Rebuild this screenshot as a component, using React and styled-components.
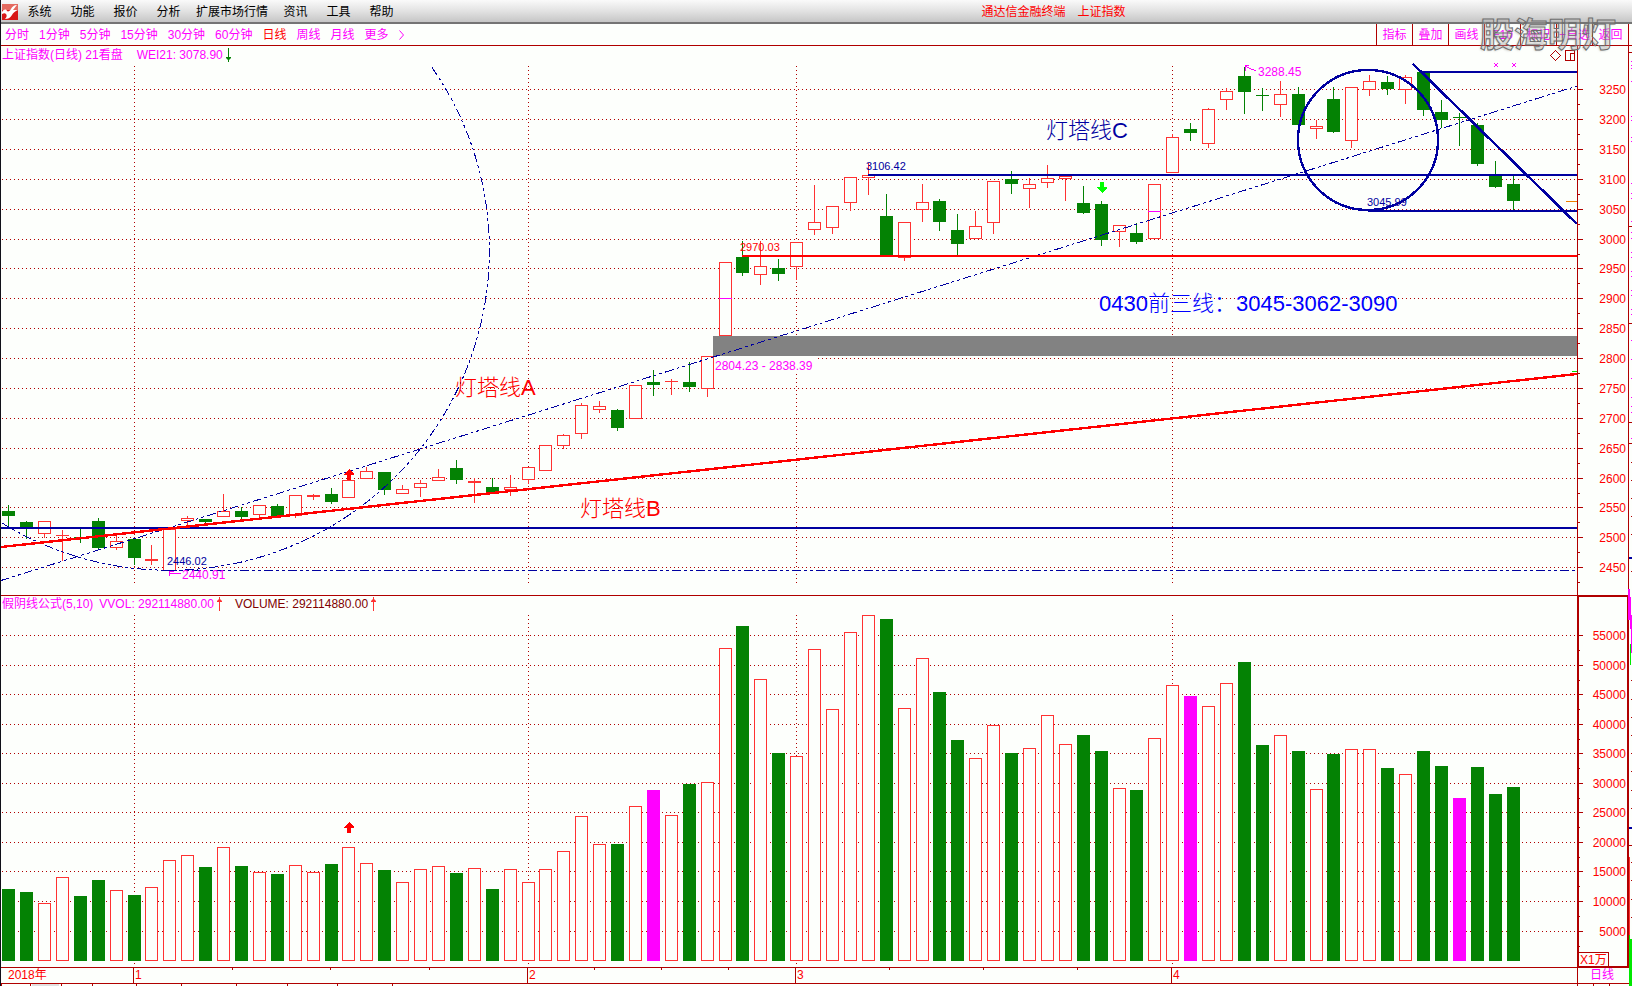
import styled, { createGlobalStyle } from "styled-components";

const BG = "#fdfffc";
const LINE = "#b00000";
const RED = "#ff0000";
const UP = "#ff3232";
const DOWN = "#048204";
const NAVY = "#0000a0";
const PINK = "#ff00ff";

const GlobalStyle = createGlobalStyle`
  * {
    box-sizing: border-box;
  }

  body {
    margin: 0;
    background: ${BG};
    font-family: "Liberation Sans", "Noto Sans CJK SC", sans-serif;
    font-size: 12px;
  }
`;

const Page = styled.div`
  position: relative;
  border-left: 1px solid #101018;
  overflow: hidden;
`;

const MenuBar = styled.header`
  display: grid;
  grid-template-columns: 60% 1fr;
  align-items: center;
  height: 24px;
  padding-top: 1px;
  border-bottom: 2px solid #747474;
  background: linear-gradient(#fafafa, #e2e2e2 50%, #c6c6c6);
`;

const Menu = styled.nav`
  display: flex;
  align-items: center;
`;

const Logo = styled.svg`
  display: block;
  width: 16px;
  height: 16px;
  margin-left: 1px;
`;

const MenuButton = styled.button`
  min-width: 43px;
  padding: 0 6px;
  border: 0;
  background: none;
  color: #000;
  font: inherit;
  line-height: 20px;
  white-space: nowrap;
`;

const Title = styled.div`
  display: flex;
  gap: 12px;
  padding-left: 2px;
  color: ${RED};
  line-height: 20px;
  white-space: nowrap;
`;

const Toolbar = styled.div`
  display: flex;
  justify-content: space-between;
  height: 22px;
  padding-right: 3px;
  border-bottom: 1px solid ${LINE};
`;

const Periods = styled.div`
  display: flex;
  align-items: center;
  gap: 10px;
  padding-left: 4px;
`;

const PeriodButton = styled.button`
  padding: 0;
  border: 0;
  background: none;
  color: ${(props) => (props.$active ? RED : PINK)};
  font: inherit;
  line-height: 20px;
  white-space: nowrap;
`;

const Tools = styled.div`
  display: flex;
  border-right: 1px solid ${LINE};
`;

const ToolButton = styled.button`
  width: 36px;
  padding: 0;
  border: 0;
  border-left: 1px solid ${LINE};
  background: none;
  color: ${PINK};
  font: inherit;
  line-height: 20px;
  white-space: nowrap;
`;

const Watermark = styled.div`
  position: absolute;
  top: 12px;
  right: 16px;
  color: rgba(255, 255, 255, 0.15);
  font-size: 34px;
  font-weight: 700;
  line-height: 46px;
  -webkit-text-stroke: 1px #6c6c6c;
  text-shadow: -1px 1px 2px rgba(120, 120, 120, 0.35);
  pointer-events: none;
`;

const Panel = styled.section`
  position: relative;
`;

const Legend = styled.div`
  position: absolute;
  top: 1px;
  left: 1px;
  display: flex;
  line-height: 16px;
  white-space: nowrap;
`;

const LegendItem = styled.span`
  display: flex;
  align-items: center;
  gap: 2px;
  height: 16px;
  margin-right: ${(props) => props.$space || 0}px;
  color: ${(props) => props.$color || PINK};
`;

const LegendArrow = styled.svg`
  width: 7px;
  height: 14px;
`;

const Chart = styled.svg`
  display: block;
  width: 100%;
  font-size: 12px;
`;

const Label = styled.text`
  fill: ${(props) => props.$color};
  font-size: ${(props) => props.$size || 12}px;
  font-weight: ${(props) => (props.$size > 20 ? 300 : 400)};
  text-anchor: ${(props) => (props.$end ? "end" : "start")};
  white-space: pre;
`;

const menus = ["系统", "功能", "报价", "分析", "扩展市场行情", "资讯", "工具", "帮助"];
const periods = ["分时", "1分钟", "5分钟", "15分钟", "30分钟", "60分钟", "日线", "周线", "月线", "更多"];
const tools = ["指标", "叠加", "画线", "F10", "标记", "+自选", "返回"];

// [direction, body top, body bottom, high, low, volume top, volume colour]
const bars = [
  ["g", 511, 516, 505, 527, 889],
  ["g", 522, 528, 521, 538, 892],
  ["r", 521, 533, 521, 537, 903],
  ["r", 535, 535, 530, 560, 877],
  ["g", 537, 539, 529, 542, 896],
  ["g", 521, 548, 518, 548, 880],
  ["r", 541, 547, 535, 549, 890],
  ["g", 539, 558, 538, 564, 895],
  ["r", 559, 560, 545, 564, 887],
  ["r", 529, 570, 529, 570, 860],
  ["r", 518, 520, 516, 526, 855],
  ["g", 519, 522, 519, 524, 867],
  ["r", 511, 516, 494, 516, 847],
  ["g", 511, 517, 507, 519, 866],
  ["r", 505, 514, 505, 518, 872],
  ["g", 506, 516, 504, 516, 874],
  ["r", 495, 515, 495, 517, 865],
  ["r", 495, 496, 494, 499, 872],
  ["g", 494, 502, 488, 503, 864],
  ["r", 480, 497, 478, 497, 847],
  ["r", 471, 478, 467, 478, 863],
  ["g", 472, 490, 472, 494, 870],
  ["r", 489, 493, 485, 493, 882],
  ["r", 483, 487, 480, 496, 869],
  ["r", 477, 480, 469, 480, 866],
  ["g", 468, 480, 460, 483, 873],
  ["r", 481, 482, 478, 502, 868],
  ["g", 487, 492, 478, 492, 889],
  ["r", 487, 489, 475, 495, 869],
  ["r", 467, 479, 467, 483, 882],
  ["r", 445, 470, 445, 470, 869],
  ["r", 435, 445, 434, 448, 851],
  ["r", 405, 433, 403, 438, 816],
  ["r", 406, 409, 401, 412, 844],
  ["g", 410, 428, 409, 430, 844],
  ["r", 385, 418, 385, 418, 806],
  ["g", 382, 385, 370, 395, 790, "m"],
  ["r", 381, 381, 379, 394, 815],
  ["g", 382, 387, 362, 391, 784],
  ["r", 356, 388, 356, 396, 782],
  ["r", 262, 335, 262, 335, 648],
  ["g", 257, 273, 241, 275, 626],
  ["r", 266, 274, 241, 284, 679],
  ["g", 268, 274, 259, 280, 753],
  ["r", 242, 266, 242, 279, 756],
  ["r", 222, 229, 185, 234, 649],
  ["r", 206, 227, 206, 233, 709],
  ["r", 177, 202, 177, 210, 632],
  ["r", 175, 177, 163, 194, 615],
  ["g", 216, 255, 194, 255, 619],
  ["r", 222, 257, 222, 260, 708],
  ["r", 202, 209, 184, 221, 658],
  ["g", 201, 222, 199, 230, 692],
  ["g", 230, 244, 214, 256, 740],
  ["r", 226, 238, 211, 238, 758],
  ["r", 181, 222, 181, 233, 725],
  ["g", 179, 184, 171, 193, 753],
  ["r", 184, 188, 178, 207, 748],
  ["r", 178, 182, 165, 187, 715],
  ["r", 176, 178, 176, 200, 744],
  ["g", 203, 213, 186, 213, 735],
  ["g", 204, 240, 201, 245, 751],
  ["r", 225, 231, 225, 246, 788],
  ["g", 233, 242, 223, 243, 790],
  ["r", 184, 238, 184, 238, 738],
  ["r", 137, 172, 134, 172, 685],
  ["g", 129, 133, 123, 140, 696, "m"],
  ["r", 109, 143, 108, 147, 706],
  ["r", 91, 99, 88, 109, 683],
  ["g", 76, 92, 67, 113, 662],
  ["g", 95, 96, 88, 110, 745],
  ["r", 94, 104, 81, 116, 735],
  ["g", 94, 125, 87, 125, 751],
  ["r", 126, 128, 120, 138, 789],
  ["g", 99, 132, 87, 132, 754],
  ["r", 87, 140, 87, 147, 749],
  ["r", 81, 89, 75, 95, 749],
  ["g", 82, 89, 76, 94, 768],
  ["r", 77, 89, 75, 103, 774],
  ["g", 72, 110, 72, 115, 751],
  ["g", 112, 120, 100, 127, 766],
  ["g", 117, 118, 113, 145, 798, "m"],
  ["g", 125, 164, 123, 165, 767],
  ["g", 175, 187, 161, 187, 794],
  ["g", 184, 201, 175, 209, 787],
];

const months = [
  { x: 134, name: "1" },
  { x: 528, name: "2" },
  { x: 796, name: "3" },
  { x: 1172, name: "4" },
];

const priceRows = Array.from({ length: 17 }, (_, i) => ({
  value: 3250 - i * 50,
  y: Math.round(89.2 + i * 29.875),
}));

const volumeRows = Array.from({ length: 11 }, (_, i) => ({
  value: 55000 - i * 5000,
  y: Math.round(635 + i * 29.55),
}));

// the bar pitch is 18, less one every eleventh bar
function barX(i) {
  return 8 + 18 * i - Math.floor((i + 3) / 11);
}

function Candle({ x, type, top, bottom, high, low }) {
  const color = type === "g" ? DOWN : UP;

  return (
    <g>
      <rect x={x} y={high} width="1" height={low - high + 1} fill={color} />
      {type === "g" && <rect x={x - 6} y={top} width="13" height={bottom - top} fill={color} />}
      {type === "r" && bottom - top < 2 && (
        <rect x={x - 6} y={top} width="13" height={bottom - top + 1} fill={color} />
      )}
      {type === "r" && bottom - top >= 2 && (
        <rect x={x - 5.5} y={top + 0.5} width="12" height={bottom - top} fill={BG} stroke={color} />
      )}
    </g>
  );
}

function VolumeBar({ x, y, type }) {
  if (type === "r") {
    return <rect x={x - 5.5} y={y + 0.5} width="12" height={960 - y} fill={BG} stroke={UP} />;
  }
  return <rect x={x - 6} y={y} width="13" height={961 - y} fill={type === "m" ? PINK : DOWN} />;
}

function Grid({ rows, top, bottom }) {
  return (
    <g stroke={LINE} strokeDasharray="1 3">
      {rows.map((row) => (
        <line key={row.value} x1="2" x2="1577" y1={row.y + 0.5} y2={row.y + 0.5} />
      ))}
      {months.map((month) => (
        <line key={month.name} x1={month.x + 0.5} x2={month.x + 0.5} y1={top} y2={bottom} />
      ))}
    </g>
  );
}

function Scale({ rows }) {
  return (
    <g>
      {rows.map((row) => (
        <g key={row.value}>
          <rect x="1578" y={row.y} width="5" height="1" fill={LINE} />
          <rect x="1578" y={row.y + 15} width="2" height="1" fill={LINE} />
          <Label x="1626" y={row.y + 5} $color={RED} $end>
            {row.value}
          </Label>
        </g>
      ))}
    </g>
  );
}

function BlockArrow({ x, y, color, down }) {
  return (
    <path
      transform={`translate(${x} ${y}) scale(1 ${down ? -1 : 1})`}
      d="M0 0 L5 5 V6 H2 V11 H-2 V6 H-5 V5 Z"
      fill={color}
    />
  );
}

function TrendArrow({ color, down }) {
  return (
    <LegendArrow viewBox="0 0 7 14" aria-hidden="true">
      <path
        transform={down ? "rotate(180 3.5 7)" : undefined}
        d="M3 0 H4 V2 L6 4 V5 H4 V14 H3 V5 H1 V4 L3 2 Z"
        fill={color}
      />
    </LegendArrow>
  );
}

function PriceChart() {
  return (
    <Chart viewBox="1 46 1631 549" shapeRendering="crispEdges">
      <Grid rows={priceRows} top={66} bottom={583} />
      <rect x="713" y="336" width="864" height="20" fill="#828282" />
      <rect x="714" y="357" width="102" height="14" fill={BG} />

      {bars.map((bar, i) => (
        <Candle key={i} x={barX(i)} type={bar[0]} top={bar[1]} bottom={bar[2]} high={bar[3]} low={bar[4]} />
      ))}
      <rect x="719" y="298" width="13" height="1" fill={PINK} />
      <rect x="1148" y="211" width="13" height="1" fill={PINK} />

      {/* drawn lines */}
      <g fill="none" stroke={NAVY} strokeDasharray="9 3 3 3 3 3">
        <path d="M1 580.5 L1577 86" />
        <path d="M2 523 A320 320 0 0 0 431 66" />
        <path d="M168 570.5 H1577" />
      </g>
      <g fill="none" stroke={NAVY} strokeWidth="2">
        <path d="M1 528 H1577" />
        <path d="M868 175 H1577" />
        <path d="M1423 72 H1577" />
        <path d="M1368 211 H1577" />
        <path d="M1413 64 L1577 224" strokeWidth="2.6" />
        <circle cx="1368" cy="140" r="70" strokeWidth="2.4" />
      </g>
      <g fill="none" stroke={RED} strokeWidth="2">
        <path d="M1 547 L1577 374" strokeWidth="2.4" />
        <path d="M742 256 H1577" />
      </g>
      <rect x="1566" y="201" width="11" height="1" fill="#f08000" />
      <rect x="1572" y="371" width="5" height="1" fill="#00dd00" />

      <BlockArrow x={349} y={469} color={RED} />
      <BlockArrow x={1102} y={193} color="#00ff00" down />
      <g fill="none" stroke={PINK}>
        <path d="M181 573.5 H169.5 M169.5 576 V571.5 H174" />
        <path d="M1256 71 L1245.5 66.5 M1245.5 71 V65.5 H1249" />
        <path d="M1494 63 L1498 67 M1498 63 L1494 67" />
        <path d="M1512 63 L1516 67 M1516 63 L1512 67" />
      </g>
      <g fill="none" stroke={LINE}>
        <path d="M1555.5 50.5 L1560.5 55.5 L1555.5 60.5 L1550.5 55.5 Z" />
        <path d="M1565.5 50.5 H1574.5 V60.5 H1565.5 Z M1570.5 53 V60 M1570.5 53.5 H1574" />
      </g>

      <Label x="167" y="565" $color={NAVY} $size={11}>2446.02</Label>
      <Label x="866" y="170" $color={NAVY} $size={11}>3106.42</Label>
      <Label x="1367" y="206" $color={NAVY} $size={11}>3045.99</Label>
      <Label x="740" y="251" $color={RED} $size={11}>2970.03</Label>
      <Label x="182" y="579" $color={PINK}>2440.91</Label>
      <Label x="1258" y="76" $color={PINK}>3288.45</Label>
      <Label x="715" y="370" $color={PINK}>2804.23 - 2838.39</Label>
      <Label x="455" y="395" $color={RED} $size={22}>灯塔线A</Label>
      <Label x="580" y="516" $color={RED} $size={22}>灯塔线B</Label>
      <Label x="1046" y="138" $color={NAVY} $size={22}>灯塔线C</Label>
      <Label x="1099" y="311" $color="#0000ff" $size={22}>0430前三线：3045-3062-3090</Label>

      <rect x="1577" y="46" width="1" height="549" fill={LINE} />
      <rect x="1628" y="46" width="1" height="549" fill={LINE} />
      <Scale rows={priceRows} />

      {/* edge of the next window */}
      {[52, 226, 323, 422, 443].map((y) => (
        <rect key={y} x="1629" y={y} width="3" height="1" fill={LINE} />
      ))}
      {[61, 65, 68, 81, 116, 120, 137, 141, 183, 193, 198, 221, 232, 238, 252, 257, 271, 276, 290, 295, 309, 314, 340, 359, 378, 397, 406, 412, 438].map((y) => (
        <rect key={y} x="1631" y={y} width="1" height="1" fill={PINK} />
      ))}
      {[462, 480, 498, 516, 534, 571].map((y) => (
        <rect key={y} x="1631" y={y} width="1" height="1" fill={LINE} />
      ))}
      <rect x="1629" y="557" width="3" height="2" fill={NAVY} />
      <rect x="1628" y="589" width="2" height="6" fill={PINK} />
    </Chart>
  );
}

function VolumeChart() {
  return (
    <Chart viewBox="1 595 1631 372" shapeRendering="crispEdges">
      <Grid rows={volumeRows} top={615} bottom={964} />
      {bars.map((bar, i) => (
        <VolumeBar key={i} x={barX(i)} y={bar[5]} type={bar[6] || bar[0]} />
      ))}
      <BlockArrow x={349} y={822} color={RED} />

      <rect x="1" y="595" width="1577" height="1" fill={LINE} />
      <path d="M1578 967 V596 H1628 V967" fill="none" stroke={LINE} strokeWidth="2" />
      <rect x="1578" y="966" width="50" height="1" fill={LINE} />
      <Scale rows={volumeRows} />
      <path d="M1579 952.5 H1608.5 V966" fill="none" stroke={LINE} />
      <Label x="1580" y="964" $color={RED}>X1万</Label>

      {/* edge of the next window */}
      <rect x="1628" y="595" width="2" height="25" fill={PINK} />
      <rect x="1630" y="597" width="1" height="32" fill={PINK} />
      <rect x="1631" y="615" width="1" height="38" fill={PINK} />
      <rect x="1630" y="644" width="1" height="21" fill="#00e800" />
      <rect x="1629" y="827" width="3" height="2" fill={NAVY} />
      <rect x="1629" y="845" width="3" height="1" fill={LINE} />
      <rect x="1629" y="857" width="1" height="78" fill={UP} />
      <rect x="1629" y="935" width="1" height="32" fill="#00e800" />
      <rect x="1630" y="939" width="2" height="28" fill="#00e800" />
      {[680, 699, 717, 735, 753, 771, 790, 808, 862, 880, 899, 917].map((y) => (
        <rect key={y} x="1631" y={y} width="1" height="1" fill={LINE} />
      ))}
    </Chart>
  );
}

function TimeAxis() {
  return (
    <Chart viewBox="1 967 1631 19" shapeRendering="crispEdges">
      <rect x="32" y="984" width="27" height="2" fill="#e0e0e0" />
      <g fill={LINE}>
        <rect x="1" y="967" width="1628" height="1" />
        <rect x="1" y="983" width="1628" height="1" />
        <rect x="1577" y="967" width="1" height="19" />
        {months.map((month) => (
          <rect key={month.name} x={month.x - 1} y="967" width="1" height="16" />
        ))}
        {[232, 330, 429, 594, 661, 728, 889, 983, 1077].map((x) => (
          <rect key={x} x={x} y="968" width="1" height="2" />
        ))}
        {[1, 30, 61, 92, 136, 181, 236, 287, 337, 392, 1593, 1609].map((x) => (
          <rect key={x} x={x} y="984" width="1" height="2" />
        ))}
      </g>
      <rect x="1629" y="967" width="3" height="19" fill="#00e800" />
      <Label x="8" y="979" $color={RED}>2018年</Label>
      {months.map((month) => (
        <Label key={month.name} x={month.x + 1} y="979" $color={RED}>
          {month.name}
        </Label>
      ))}
      <Label x="1590" y="979" $color={PINK}>日线</Label>
    </Chart>
  );
}

function App() {
  return (
    <>
      <GlobalStyle />
      <Page>
        <MenuBar>
          <Menu>
            <Logo viewBox="0 0 16 16" aria-hidden="true">
              <rect width="16" height="16" fill="#d81818" />
              <rect width="16" height="6" fill="#e46a60" />
              <path d="M0 8 C2 5 4 5 5 7 C6 8 8 7 9 5 C10 3 12 1 15 1 C13 3 12 5 11 6 H16 C13 7 11 9 10 11 C8 14 6 15 3 15 C5 13 5 11 4 10 C3 9 2 9 0 10 Z" fill="#fff" />
            </Logo>
            {menus.map((name) => (
              <MenuButton key={name}>{name}</MenuButton>
            ))}
          </Menu>
          <Title>
            <span>通达信金融终端</span>
            <span>上证指数</span>
          </Title>
        </MenuBar>

        <Toolbar>
          <Periods>
            {periods.map((name) => (
              <PeriodButton key={name} $active={name === "日线"}>
                {name}
              </PeriodButton>
            ))}
            <svg width="5" height="10" viewBox="0 0 5 10" aria-hidden="true">
              <path d="M0.5 0.5 L4.5 5 L0.5 9.5" fill="none" stroke={PINK} />
            </svg>
          </Periods>
          <Tools>
            {tools.map((name) => (
              <ToolButton key={name}>{name}</ToolButton>
            ))}
          </Tools>
        </Toolbar>

        <Panel>
          <PriceChart />
          <Legend>
            <LegendItem $space={14}>上证指数(日线) 21看盘</LegendItem>
            <LegendItem>
              WEI21: 3078.90
              <TrendArrow color={DOWN} down />
            </LegendItem>
          </Legend>
        </Panel>

        <Panel>
          <VolumeChart />
          <Legend>
            <LegendItem $space={6}>假阴线公式(5,10)</LegendItem>
            <LegendItem $space={12}>
              VVOL: 292114880.00
              <TrendArrow color={UP} />
            </LegendItem>
            <LegendItem $color="#800000">
              VOLUME: 292114880.00
              <TrendArrow color={UP} />
            </LegendItem>
          </Legend>
        </Panel>

        <TimeAxis />
        <Watermark>股海明灯</Watermark>
      </Page>
    </>
  );
}

export default App;
